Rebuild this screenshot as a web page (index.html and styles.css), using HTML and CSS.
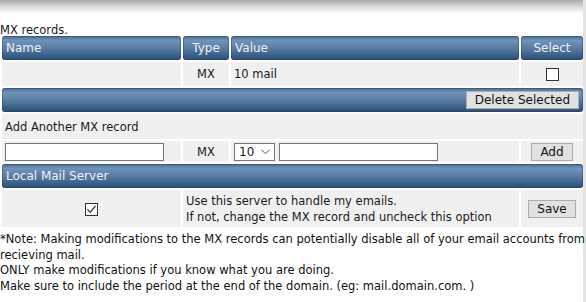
FILE: index.html
```html
<!DOCTYPE html>
<html>
<head>
<meta charset="utf-8">
<link rel="stylesheet" href="styles.css">
</head>
<body>
<div class="page">
  <div class="topshade"></div>
  <div class="caption">MX records.</div>
  <table class="grid">
    <colgroup>
      <col class="c-name"><col class="c-type"><col class="c-value"><col class="c-select">
    </colgroup>
    <tr class="head">
      <th class="left">Name</th>
      <th class="center">Type</th>
      <th class="left">Value</th>
      <th class="center">Select</th>
    </tr>
    <tr class="row">
      <td></td>
      <td class="center">MX</td>
      <td class="left">10 mail</td>
      <td class="center"><span class="cbox"></span></td>
    </tr>
    <tr class="head">
      <th colspan="4" class="right bar"><button class="btn">Delete Selected</button></th>
    </tr>
    <tr class="row">
      <td colspan="4" class="left sub">Add Another MX record</td>
    </tr>
    <tr class="row inrow">
      <td class="left"><span class="field f-name"></span></td>
      <td class="center">MX</td>
      <td class="left"><span class="pick">10<svg class="chev" width="9" height="6" viewBox="0 0 9 6"><path d="M0.5 0.8 L4.5 4.8 L8.5 0.8" fill="none" stroke="#555" stroke-width="1"/></svg></span><span class="field f-value"></span></td>
      <td class="center"><button class="btn">Add</button></td>
    </tr>
    <tr class="head">
      <th colspan="4" class="left">Local Mail Server</th>
    </tr>
    <tr class="row tall">
      <td class="center"><span class="cbox"><svg width="11" height="11" viewBox="0 0 11 11"><path d="M1.5 5.5 L4.2 8.3 L9.5 2" fill="none" stroke="#333" stroke-width="1.2"/></svg></span></td>
      <td colspan="2" class="left desc">Use this server to handle my emails.<br>If not, change the MX record and uncheck this option</td>
      <td class="center"><button class="btn">Save</button></td>
    </tr>
  </table>
  <div class="notes">*Note: Making modifications to the MX records can potentially disable all of your email accounts from<br>recieving mail.<br>ONLY make modifications if you know what you are doing.<br>Make sure to include the period at the end of the domain. (eg: mail.domain.com. )</div>
</div>
</body>
</html>
```

FILE: styles.css
```css
html, body {
  margin: 0;
  padding: 0;
  background: #ffffff;
}
body {
  font-family: "DejaVu Sans", Verdana, sans-serif;
  font-size: 11.5px;
  color: #1a1a1a;
}
.page {
  width: 583px;
  border-right: 3px solid #e4e4e4;
  min-height: 302px;
}
.topshade {
  height: 14px;
  background: linear-gradient(#a9a9a9, #d6d6d6 45%, #ffffff);
}
.caption {
  height: 20px;
  line-height: 32px;
  padding-left: 0;
}
.grid {
  border-collapse: separate;
  border-spacing: 2px;
  width: 585px;
  margin-top: 0;
  table-layout: fixed;
}
.c-name { width: 179px; }
.c-type { width: 46px; }
.c-value { width: 288px; }
.c-select { width: 62px; }
.grid th, .grid td {
  padding: 0;
  height: 24px;
  font-weight: normal;
  white-space: nowrap;
}
.head th {
  color: #eef2f7;
  font-size: 12px;
  background: linear-gradient(#45698f 0%, #7193b9 18%, #5a7da4 50%, #3b6088 80%, #2b4f78 100%);
  border-radius: 3px;
  box-shadow: inset 0 0 0 1px rgba(30, 55, 85, 0.35);
}
.head th.left { text-align: left; padding-left: 4px; }
.head th.center { text-align: center; }
.head th.right { text-align: right; padding-right: 4px; }
.row td { background: #f0f0f0; }
.row td.left { padding-left: 3px; }
.row td.center { text-align: center; }
.row td.sub { height: 25px; }
.inrow td { height: 21px; vertical-align: middle; }
.tall td { height: 37px; }
.desc { line-height: 16px; padding-top: 1px; }
.cbox {
  display: inline-flex;
  align-items: center;
  justify-content: center;
  width: 11px;
  height: 11px;
  border: 1px solid #333;
  background: #fff;
  vertical-align: middle;
}
.btn {
  font-family: "DejaVu Sans", Verdana, sans-serif;
  font-size: 12px;
  color: #111;
  background: #e1e1e1;
  border: 1px solid #adadad;
  height: 18px;
  padding: 0 8px;
  margin: 0;
  line-height: 16px;
  vertical-align: middle;
}
.field {
  display: inline-block;
  height: 16px;
  background: #fff;
  border: 1px solid #767676;
  vertical-align: middle;
}
.f-name { width: 157px; }
.f-value { width: 157px; margin-left: 4px; }
.pick {
  display: inline-flex;
  align-items: center;
  justify-content: space-between;
  box-sizing: border-box;
  width: 41px;
  height: 18px;
  padding: 0 4px 0 4px;
  margin-left: 0;
  background: #fff;
  border: 1px solid #767676;
  font-size: 12px;
  vertical-align: middle;
}
.chev { margin-top: 1px; }
.notes {
  padding-top: 3px;
  line-height: 15.6px;
  color: #111;
  white-space: nowrap;
}
```
